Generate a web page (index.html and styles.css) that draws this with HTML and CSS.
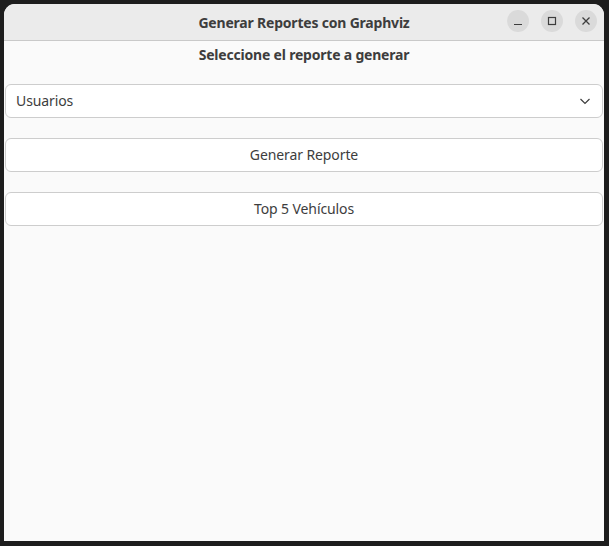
FILE: index.html
```html
<!DOCTYPE html>
<html lang="es">
<head>
<meta charset="utf-8">
<title>Generar Reportes con Graphviz</title>
<link rel="stylesheet" href="styles.css">
</head>
<body>
<div class="window">
  <header class="titlebar">
    <div class="title">Generar Reportes con Graphviz</div>
    <div class="controls">
      <span class="ctl"><svg width="10" height="10" viewBox="0 0 10 10"><path d="M1 8.5h8" stroke="#3d3d3d" stroke-width="1.2" fill="none"/></svg></span>
      <span class="ctl"><svg width="10" height="10" viewBox="0 0 10 10"><rect x="1.5" y="1.5" width="7" height="7" stroke="#3d3d3d" stroke-width="1.2" fill="none"/></svg></span>
      <span class="ctl"><svg width="10" height="10" viewBox="0 0 10 10"><path d="M1.5 1.5l7 7M8.5 1.5l-7 7" stroke="#3d3d3d" stroke-width="1.3" fill="none"/></svg></span>
    </div>
  </header>
  <main class="content">
    <div class="heading">Seleccione el reporte a generar</div>
    <div class="combo">
      <span>Usuarios</span>
      <svg width="12" height="8" viewBox="0 0 12 8"><path d="M1.5 2l4.5 4.5L10.5 2" stroke="#3d3d3d" stroke-width="1.2" fill="none"/></svg>
    </div>
    <button class="btn">Generar Reporte</button>
    <button class="btn">Top 5 Vehículos</button>
  </main>
</div>
</body>
</html>
```
FILE: styles.css
```css
html, body {
  margin: 0;
  padding: 0;
  background: #1d1d1d;
  width: 609px;
  height: 546px;
  overflow: hidden;
}
body {
  padding: 4px 5px 5px 4px;
  box-sizing: border-box;
  font-family: "Noto Sans", "Open Sans", sans-serif;
  color: #3d3d3d;
}
.window {
  width: 600px;
  height: 537px;
  background: #fafafa;
  border-radius: 11px 11px 0 0;
  overflow: hidden;
  display: flex;
  flex-direction: column;
}
.titlebar {
  height: 36px;
  background: #ebebeb;
  border-bottom: 1px solid #c9c9c9;
  position: relative;
  display: flex;
  align-items: center;
  justify-content: center;
}
.title {
  font-weight: bold;
  font-size: 14px;
  letter-spacing: -0.2px;
}
.controls {
  position: absolute;
  right: 7px;
  top: 6px;
  display: flex;
  gap: 12px;
}
.ctl {
  width: 22px;
  height: 22px;
  border-radius: 50%;
  background: #dadada;
  display: flex;
  align-items: center;
  justify-content: center;
}
.content {
  display: flex;
  flex-direction: column;
  padding: 0 1px 0 1px;
}
.heading {
  text-align: center;
  font-weight: bold;
  font-size: 14px;
  letter-spacing: -0.2px;
  height: 30px;
  line-height: 27px;
  margin-bottom: 13px;
}
.combo, .btn {
  height: 34px;
  box-sizing: border-box;
  border: 1px solid #cdcdcd;
  border-radius: 6px;
  background: #ffffff;
  font-family: "Noto Sans", "Open Sans", sans-serif;
  font-size: 14px;
  color: #3d3d3d;
  letter-spacing: -0.1px;
  padding-bottom: 2px;
}
.combo {
  display: flex;
  align-items: center;
  justify-content: space-between;
  padding-left: 10px;
  padding-right: 11px;
}
.combo svg {
  margin-top: 2px;
}
.btn {
  margin-top: 20px;
  width: 100%;
  padding-left: 0;
  padding-right: 0;
  padding-top: 0;
}
```
